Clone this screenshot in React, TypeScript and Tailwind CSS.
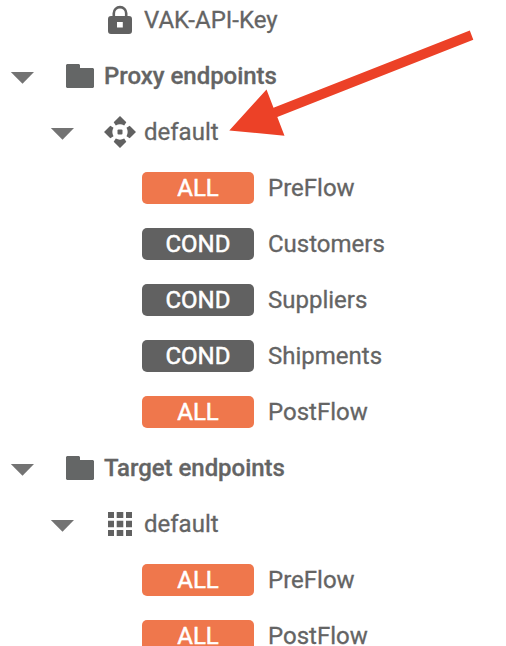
import type { ReactNode } from "react";

const Caret = () => (
  <svg className="w-6 h-3 shrink-0" viewBox="0 0 24 12" fill="#737373">
    <path d="M0.800 0H24L12.500 11.800Z" />
  </svg>
);

const Lock = () => (
  <svg className="w-8 h-8 shrink-0" viewBox="0 0 32 32" fill="#616161">
    <path fillRule="evenodd" d="M7 12H25Q28 12 28 15V27Q28 30 25 30H7Q4 30 4 27V15Q4 12 7 12ZM13 18V23.500H18.800V18Z" />
    <path d="M9.800 13V9.300A6.200 6.200 0 0 1 22.200 9.300V13" fill="none" stroke="#616161" strokeWidth="2.600" />
  </svg>
);

const Folder = () => (
  <svg className="w-7 h-6 shrink-0" viewBox="0 0 28 24" fill="#646666">
    <path d="M1 0H13L14 1V4H27L28 5V23L27 24H1L0 23V1Z" />
  </svg>
);

const Move = () => (
  <svg className="w-8 h-8 shrink-0" viewBox="0 0 32 32" fill="#616161">
    <path d="M16 0L22.300 6.300L20.200 9.500Q16 7.200 11.800 9.500L9.700 6.300ZM16 32L9.700 25.700L11.800 22.500Q16 24.800 20.200 22.500L22.300 25.700ZM0 16L6.300 9.700L9.500 11.800Q7.200 16 9.500 20.200L6.300 22.300ZM32 16L25.700 22.300L22.500 20.200Q24.800 16 22.500 11.800L25.700 9.700Z" />
    <rect x="13.500" y="13.500" width="5" height="5" rx="1" />
  </svg>
);

const Apps = () => (
  <svg className="w-8 h-8 shrink-0" viewBox="0 0 32 32" fill="#616161">
    <path d="M4 4h6v6H4zM12.700 4h6.600v6h-6.600zM22 4h6v6h-6zM4 12.700h6v6.600H4zM12.700 12.700h6.600v6.600h-6.600zM22 12.700h6v6.600h-6zM4 22h6v6H4zM12.700 22h6.600v6h-6.600zM22 22h6v6h-6z" />
  </svg>
);

const Section = ({ title }: { title: string }) => (
  <div className="flex h-14 items-center pl-[10px]">
    <div className="pt-1"><Caret /></div>
    <div className="ml-8"><Folder /></div>
    <span className="ml-[10px] font-medium tracking-[-0.03px]">{title}</span>
  </div>
);

const Endpoint = ({ icon }: { icon: ReactNode }) => (
  <div className="flex h-14 items-center pl-[50px]">
    <div className="pt-1"><Caret /></div>
    <div className="ml-[30px]">{icon}</div>
    <span className="ml-2">default</span>
  </div>
);

const Flow = ({ kind, name }: { kind: "ALL" | "COND"; name: string }) => (
  <div className="flex h-14 items-center pl-[142px]">
    <span
      className={`flex h-8 w-28 items-center justify-center rounded-[5px] text-white [-webkit-text-stroke:0.5px_#fff] ${
        kind === "ALL" ? "bg-[#ef774c]" : "bg-[#616161]"
      }`}
    >
      {kind}
    </span>
    <span className="ml-[14px]">{name}</span>
  </div>
);

export default function App() {
  return (
    <div className="relative h-[646px] w-[506px] overflow-hidden bg-white font-['Roboto',sans-serif] text-[24px] leading-8 whitespace-nowrap text-[#646464] [-webkit-text-stroke:0.3px_#646464]">
      <div className="-mt-2">
        <div className="flex h-14 items-center pl-[104px]">
          <Lock />
          <span className="ml-2">VAK-API-Key</span>
        </div>
        <Section title="Proxy endpoints" />
        <Endpoint icon={<Move />} />
        <Flow kind="ALL" name="PreFlow" />
        <Flow kind="COND" name="Customers" />
        <Flow kind="COND" name="Suppliers" />
        <Flow kind="COND" name="Shipments" />
        <Flow kind="ALL" name="PostFlow" />
        <Section title="Target endpoints" />
        <Endpoint icon={<Apps />} />
        <Flow kind="ALL" name="PreFlow" />
        <Flow kind="ALL" name="PostFlow" />
      </div>
      <svg className="absolute top-0 left-0 h-[160px] w-[506px]" viewBox="0 0 506 160" fill="#ec4127">
        <path d="M229.300 130.500L266.500 89.500L273.500 107.800L469.800 30.500L473.300 39.800L277.300 117L284.500 135.800Z" />
      </svg>
    </div>
  );
}
